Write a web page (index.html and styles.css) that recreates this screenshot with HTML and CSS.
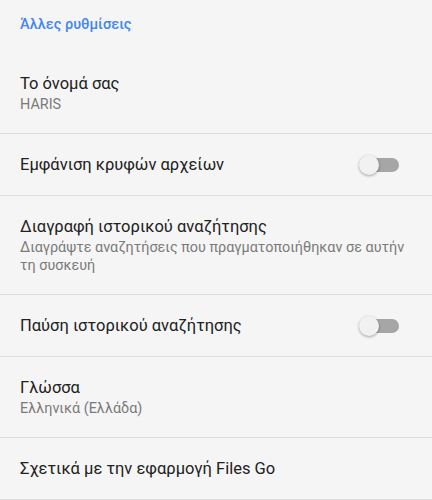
FILE: index.html
```html
<!DOCTYPE html>
<html lang="el">
<head>
  <meta charset="UTF-8">
  <title>Ρυθμίσεις - Files Go</title>
  <meta name="viewport" content="width=device-width, initial-scale=1">
  <link rel="stylesheet" href="styles.css">
</head>
<body>
  <div class="settings">
    <h3 class="section-title">Άλλες ρυθμίσεις</h3>

    <div class="row">
      <div class="row-text">
        <div class="title">Το όνομά σας</div>
        <div class="summary">HARIS</div>
      </div>
    </div>

    <div class="row">
      <div class="row-text">
        <div class="title">Εμφάνιση κρυφών αρχείων</div>
      </div>
      <span class="switch"><span class="knob"></span></span>
    </div>

    <div class="row">
      <div class="row-text">
        <div class="title">Διαγραφή ιστορικού αναζήτησης</div>
        <div class="summary">Διαγράψτε αναζητήσεις που πραγματοποιήθηκαν σε αυτήν τη συσκευή</div>
      </div>
    </div>

    <div class="row">
      <div class="row-text">
        <div class="title">Παύση ιστορικού αναζήτησης</div>
      </div>
      <span class="switch"><span class="knob"></span></span>
    </div>

    <div class="row">
      <div class="row-text">
        <div class="title">Γλώσσα</div>
        <div class="summary">Ελληνικά (Ελλάδα)</div>
      </div>
    </div>

    <div class="row">
      <div class="row-text">
        <div class="title">Σχετικά με την εφαρμογή Files Go</div>
      </div>
    </div>
  </div>
</body>
</html>
```

FILE: styles.css
```css
* {
  box-sizing: border-box;
}

body {
  margin: 0;
  font-family: Roboto, "Noto Sans", sans-serif;
  background: #f5f5f5;
  color: #212121;
}

.settings {
  width: 432px;
}

.section-title {
  margin: 0;
  padding: 13px 20px 17px;
  font-size: 14.5px;
  line-height: 23px;
  font-weight: 500;
  color: #4285f4;
}

.row {
  display: flex;
  align-items: center;
  padding: 19px 20px;
  border-bottom: 1px solid #dcdcdc;
}

.row-text {
  flex: 1;
  min-width: 0;
}

.title {
  font-size: 16.5px;
  line-height: 23px;
}

.summary {
  margin-top: 1px;
  font-size: 14.4px;
  line-height: 18px;
  color: #7a7a7a;
}

.switch {
  position: relative;
  width: 34px;
  height: 14px;
  margin-right: 13px;
  border-radius: 7px;
  background: #a6a6a6;
}

.knob {
  position: absolute;
  left: -6px;
  top: -3px;
  width: 20px;
  height: 20px;
  border-radius: 50%;
  background: #f1f1f1;
  box-shadow: 0 1px 3px rgba(0, 0, 0, 0.35);
}
```
